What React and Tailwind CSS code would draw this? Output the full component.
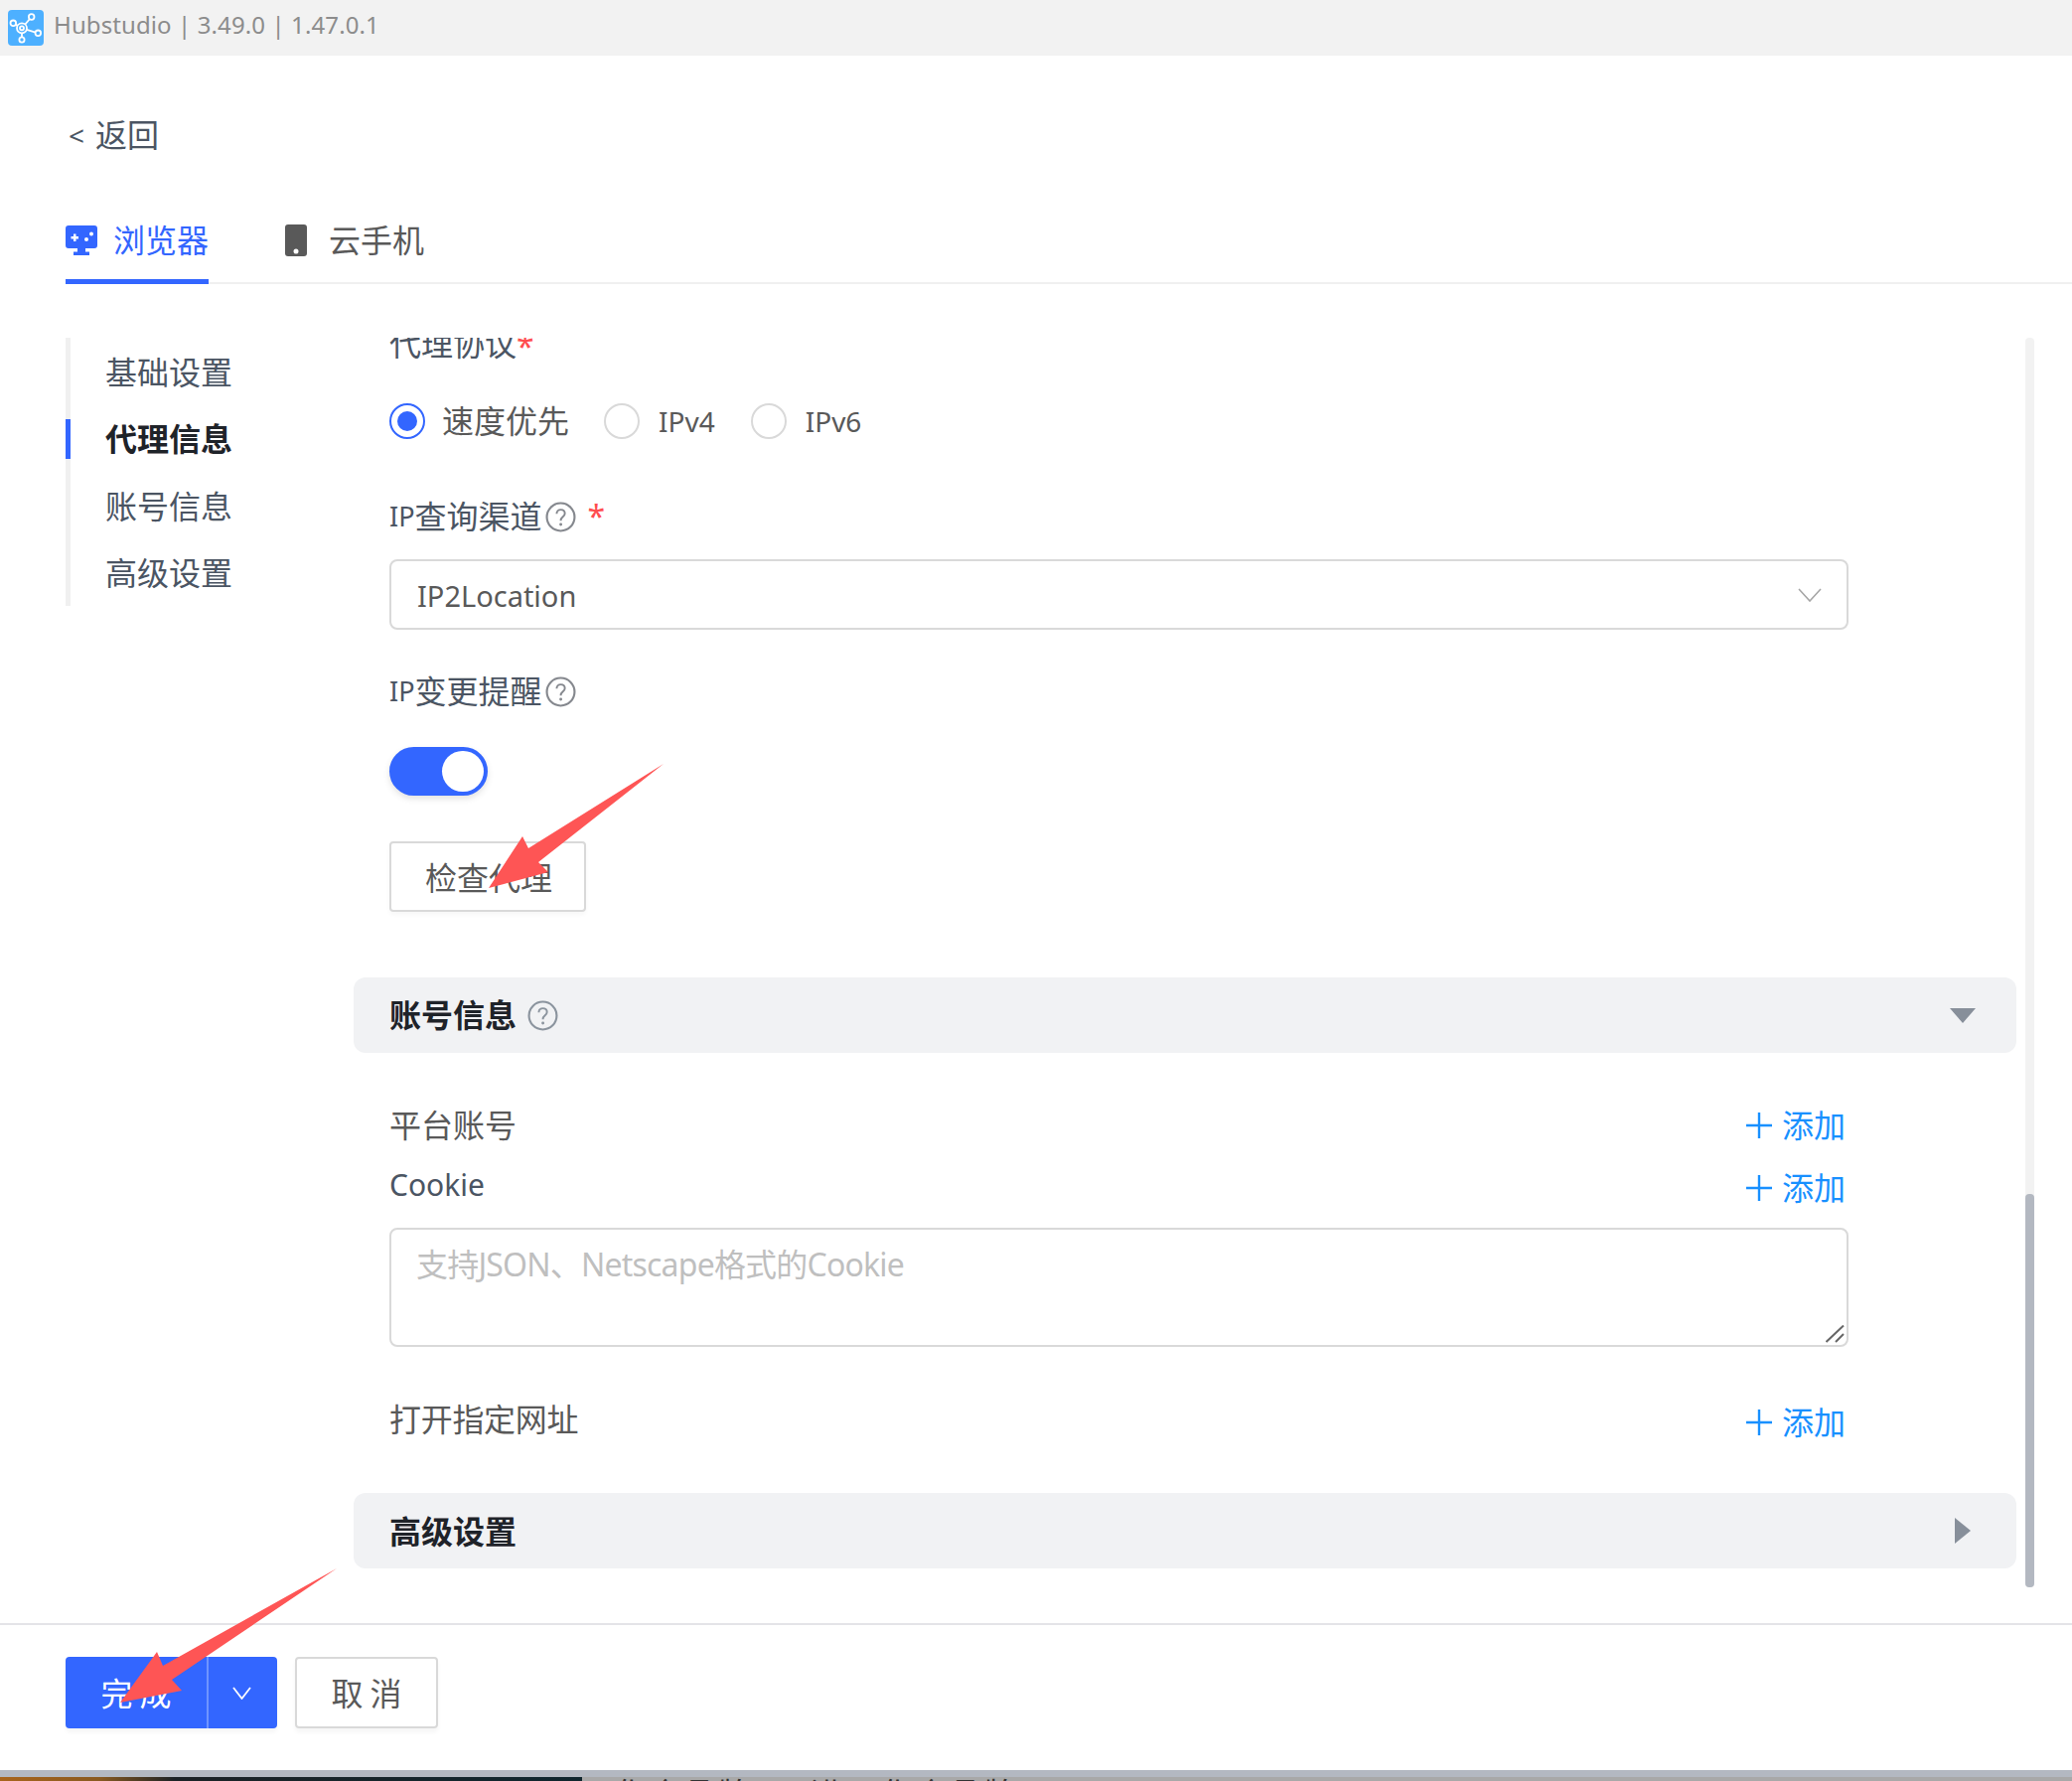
function Help({ className = 'w-[31px] h-[31px] text-[#85888e]' }) {
  return (
    <svg viewBox="0 0 32 32" className={className} fill="none" stroke="currentColor">
      <circle cx="16" cy="16" r="14.4" strokeWidth="2.2" />
      <path d="M11.8 12.6c0-2.5 1.9-4.2 4.3-4.2s4.200 1.600 4.200 3.900c0 3.300-4.200 3.500-4.200 7v.6" strokeWidth="2" />
      <circle cx="16.100" cy="23.700" r="1.500" fill="currentColor" stroke="none" />
    </svg>
  )
}

function Radio({ checked, label, labelClass }) {
  return (
    <div className="flex items-center">
      <div className={`w-[36px] h-[36px] rounded-full border-2 flex items-center justify-center ${checked ? 'border-[#3366ff]' : 'border-[#d9d9d9]'}`}>
        {checked && <div className="w-[20px] h-[20px] rounded-full bg-[#3366ff]" />}
      </div>
      <span className={`text-[#595959] leading-[44px] ${labelClass}`}>{label}</span>
    </div>
  )
}

function AddLink() {
  return (
    <div className="flex items-center text-[#1890ff] leading-[44px]">
      <svg viewBox="0 0 26 26" className="w-[26px] h-[26px]" fill="none" stroke="currentColor" strokeWidth="2.4">
        <path d="M0 13H26M13 0V26" />
      </svg>
      <span className="ml-[10px]">添加</span>
    </div>
  )
}

function SectionHead({ title, children, arrow }) {
  return (
    <div className="h-[76px] bg-[#f1f2f4] rounded-[12px] flex items-center pl-[36px] pr-[41px]">
      <span className="font-bold text-[#1f2329] leading-[44px]">{title}</span>
      {children}
      <div className="ml-auto">{arrow}</div>
    </div>
  )
}

const navItems = ['基础设置', '代理信息', '账号信息', '高级设置']

export default function App() {
  return (
    <div lang="zh-CN" className="relative w-[2086px] h-[1793px] overflow-hidden bg-white text-[32px] font-['Noto_Sans','Noto_Sans_CJK_SC',sans-serif]">
      {/* title bar */}
      <div className="h-[56px] bg-[#f2f2f2] flex items-center pl-[8px]">
        <svg viewBox="0 0 36 36" className="w-[36px] h-[36px]">
          <rect width="36" height="36" rx="4" fill="#4db0ff" />
          <g stroke="#fff" strokeWidth="1.800" fill="none">
            <path d="M14 18.300L23.700 7M14 18.300L5.300 13.300M14 18.300L30.300 23.300M14 18.300V29.300" />
            <circle cx="14" cy="18.300" r="5" fill="#4db0ff" />
            <circle cx="14" cy="18.300" r="2" fill="#4db0ff" />
            <circle cx="23.700" cy="7" r="2.800" fill="#4db0ff" />
            <circle cx="5.300" cy="13.300" r="2.800" fill="#4db0ff" />
            <circle cx="30.300" cy="23.300" r="2.800" fill="#4db0ff" />
            <circle cx="14" cy="30" r="2.600" fill="#4db0ff" />
          </g>
        </svg>
        <span className="ml-[10px] -mt-[6px] text-[24px] tracking-[0.1px] text-[#8c8c8c]">Hubstudio | 3.49.0 | 1.47.0.1</span>
      </div>

      {/* back */}
      <div className="pt-[58px] pl-[69px] flex items-center leading-[44px] text-[#4b5563]">
        <span className="text-[28px]">&lt;</span>
        <span className="ml-[11px]">返回</span>
      </div>

      {/* tabs */}
      <div className="mt-[42px] ml-[66px] h-[86px] border-b-2 border-[#f0f0f0] flex items-start gap-[77px]">
        <div className="h-[86px] -mb-[2px] border-b-[5px] border-[#3366ff] flex items-center pt-[3px] text-[#3366ff]">
          <svg viewBox="0 0 32 30" className="w-[32px] h-[30px]">
            <path fill="#3366ff" d="M3 0H29a3 3 0 0 1 3 3V20a3 3 0 0 1-3 3H20V26.500H24V30H8V26.500H12V23H3a3 3 0 0 1-3-3V3a3 3 0 0 1 3-3Z" />
            <path fill="#fff" d="M8 8.500H10.500V11H13V13.500H10.500V16H8V13.500H5.500V11H8Z" />
            <circle cx="21" cy="14" r="2" fill="#fff" />
            <circle cx="26" cy="8.500" r="2" fill="#fff" />
          </svg>
          <span className="ml-[16px] leading-[44px]">浏览器</span>
        </div>
        <div className="h-[84px] flex items-center text-[#595959]">
          <svg viewBox="0 0 22 32" className="w-[22px] h-[32px]">
            <rect width="22" height="32" rx="3" fill="#595959" />
            <circle cx="11" cy="27" r="2.500" fill="#fff" />
          </svg>
          <span className="ml-[22px] leading-[44px]">云手机</span>
        </div>
      </div>

      {/* body */}
      <div className="mt-[54px] h-[1294px] flex items-start pl-[66px]">
        <div className="w-[290px] h-[270px] border-l-[5px] border-[#f0f0f0] flex flex-col shrink-0">
          {navItems.map((item, i) => (
            <div key={item} className={`relative h-[67.5px] flex items-center pl-[35px] pt-[2px] ${i === 1 ? 'font-bold text-[#1f2329]' : 'text-[#4b5563]'}`}>
              {i === 1 && <span className="absolute -left-[5px] top-[14px] w-[5px] h-[40px] bg-[#3366ff]" />}
              {item}
            </div>
          ))}
        </div>

        <div className="w-[1674px] h-[1258px] overflow-hidden shrink-0">
          <div className="pl-[36px] -mt-[16px] h-[44px] flex leading-[44px] text-[#4b5563]">
            代理协议<span className="relative top-[3px] text-[#ff4d4f]">*</span>
          </div>

          <div className="pl-[36px] mt-[38px] h-[36px] flex items-center">
            <Radio checked label="速度优先" labelClass="ml-[17px]" />
            <div className="ml-[35px]"><Radio label="IPv4" labelClass="ml-[19px] text-[28px]" /></div>
            <div className="ml-[36px]"><Radio label="IPv6" labelClass="ml-[19px] text-[28px]" /></div>
          </div>

          <div className="pl-[36px] mt-[56px] h-[44px] flex items-center leading-[44px] text-[#4b5563]">
            <span className="text-[27px]">IP</span>查询渠道
            <span className="ml-[3px]"><Help /></span>
            <span className="ml-[12px] text-[#ff4d4f]">*</span>
          </div>

          <div className="ml-[36px] mt-[21px] w-[1469px] h-[71px] border-2 border-[#d9d9d9] rounded-[8px] flex items-center pl-[26px] pr-[25px] pt-[2px] text-[29px] text-[#595959]">
            IP2Location
            <svg viewBox="0 0 24 14" className="ml-auto -mt-[2px] w-[24px] h-[14px]" fill="none" stroke="#a6a6a6" strokeWidth="1.600">
              <path d="M1 1L12 13L23 1" />
            </svg>
          </div>

          <div className="pl-[36px] mt-[40px] h-[44px] flex items-center leading-[44px] text-[#4b5563]">
            <span className="text-[27px]">IP</span>变更提醒
            <span className="ml-[3px]"><Help /></span>
          </div>

          <div className="ml-[36px] mt-[34px] w-[99px] h-[49px] rounded-full bg-[#3366ff] flex items-center justify-end pr-[4px] shadow-[0_3px_6px_rgba(0,0,0,0.12)]">
            <div className="w-[42px] h-[41px] rounded-full bg-white" />
          </div>

          <div className="ml-[36px] mt-[46px] w-[198px] h-[71px] border-2 border-[#d9d9d9] rounded-[4px] flex items-center justify-center pt-[2px] pl-[2px] text-[#595959] shadow-[0_3px_4px_rgba(0,0,0,0.03)]">
            检查代理
          </div>

          <div className="mt-[66px]">
            <SectionHead
              title="账号信息"
              arrow={
                <svg viewBox="0 0 26 15" className="w-[26px] h-[15px]">
                  <path d="M0 0H26L13 15Z" fill="#878f9a" />
                </svg>
              }
            >
              <span className="ml-[11px]"><Help className="w-[31px] h-[31px] text-[#8b949e]" /></span>
            </SectionHead>
          </div>

          <div className="pl-[36px] w-[1502px] mt-[51px] h-[44px] flex items-center justify-between text-[#595959] leading-[44px]">
            平台账号
            <AddLink />
          </div>

          <div className="pl-[36px] w-[1502px] mt-[19px] h-[44px] flex items-center justify-between text-[#4b5563] leading-[44px]">
            <span className="text-[30px] -mt-[6px]">Cookie</span>
            <AddLink />
          </div>

          <div className="relative ml-[36px] mt-[18px] w-[1469px] h-[120px]">
            <textarea
              placeholder="支持JSON、Netscape格式的Cookie"
              className="block w-full h-full border-2 border-[#d9d9d9] rounded-[8px] outline-none resize-none px-[25px] py-[13px] leading-[44px] tracking-[-0.8px] placeholder:text-[#bfbfbf]"
            />
            <svg viewBox="0 0 19 18" className="absolute right-[4px] bottom-[4px] w-[19px] h-[18px] pointer-events-none" fill="none" stroke="#666" strokeWidth="2">
              <path d="M0.500 17L18 0.500M10 17L18 9" />
            </svg>
          </div>

          <div className="pl-[36px] w-[1502px] mt-[54px] h-[44px] flex items-center justify-between text-[#595959] leading-[44px]">
            <span className="-mt-[6px] tracking-[-0.3px]">打开指定网址</span>
            <AddLink />
          </div>

          <div className="mt-[49px]">
            <SectionHead
              title={<span className="relative top-[1px]">高级设置</span>}
              arrow={
                <svg viewBox="0 0 16 26" className="w-[16px] h-[26px] mr-[5px]">
                  <path d="M0 0L16 13L0 26Z" fill="#878f9a" />
                </svg>
              }
            />
          </div>
        </div>

        <div className="ml-[9px] w-[9px] h-[1258px] bg-[#f2f2f2] rounded-[4px] flex flex-col justify-end shrink-0">
          <div className="h-[396px] bg-[#b3b8c1] rounded-[4px]" />
        </div>
      </div>

      {/* footer */}
      <div className="h-[148px] border-t-2 border-[#e4e4e8] pt-[32px] pl-[66px] flex items-start">
        <div className="w-[213px] h-[72px] bg-[#3366ff] rounded-[4px] flex text-white shadow-[0_4px_4px_rgba(0,0,0,0.04)]">
          <div className="w-[142px] flex items-center justify-center pt-[2px] pl-[7px] tracking-[7px]">完成</div>
          <div className="w-[2px] bg-[#6f94ff]" />
          <div className="flex-1 flex items-center justify-center">
            <svg viewBox="0 0 19 13" className="w-[19px] h-[13px] -ml-[2px]" fill="none" stroke="#fff" strokeWidth="1.800">
              <path d="M1 1L9.500 12L18 1" />
            </svg>
          </div>
        </div>
        <div className="ml-[18px] w-[144px] h-[72px] border-2 border-[#d9d9d9] rounded-[4px] flex items-center justify-center pt-[2px] pl-[7px] text-[#595959] tracking-[7px] shadow-[0_4px_4px_rgba(0,0,0,0.04)]">
          取消
        </div>
      </div>

      {/* window behind */}
      <div className="h-[7px] bg-[#b3b8c1]" />
      <div className="h-[4px] flex">
        <div className="w-[586px] bg-[linear-gradient(90deg,#a8641c_0,#8a5a20_17%,#1c2226_30%,#10262e_100%)]" />
        <div className="flex-1 bg-[#a8a8a8] overflow-hidden pl-[32px] text-[32px] tracking-[3px] leading-[34px] text-[#333]">
          化合品牌 — 进口化合品牌 1元 K A
        </div>
      </div>

      {/* red annotation arrows */}
      <svg className="absolute inset-0 w-[2086px] h-[1793px] pointer-events-none" viewBox="0 0 2086 1793">
        <polygon fill="#fe5555" points="492,894 526,842 532,854 668,769 542,868 552,878" />
        <polygon fill="#fe5555" points="121,1714 158,1663 164,1677 339,1579 173,1691 183,1702" />
      </svg>
    </div>
  )
}
